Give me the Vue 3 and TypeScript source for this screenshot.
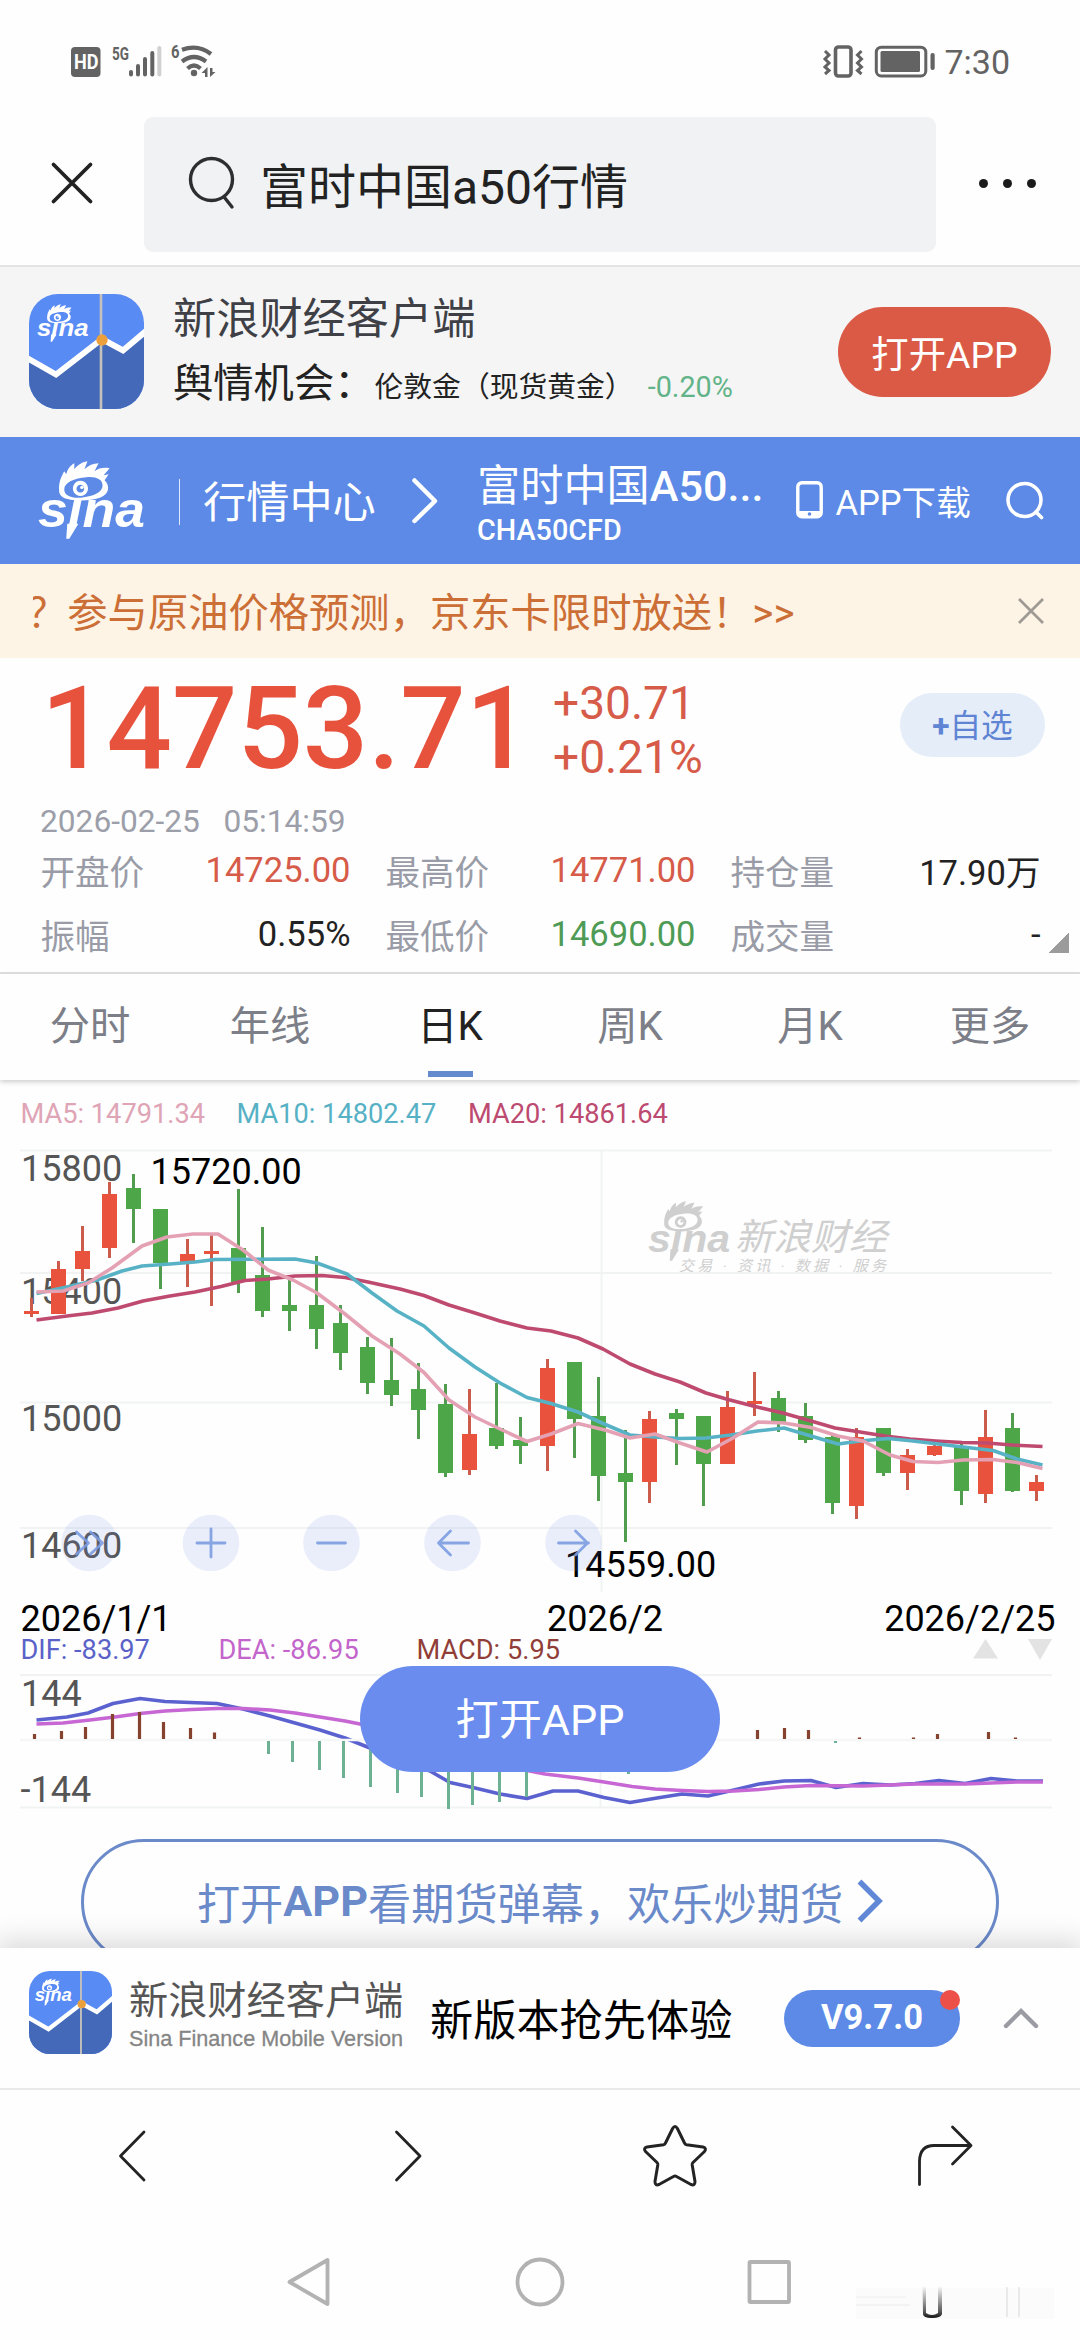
<script setup lang="ts">
type Candle = [x: number, high: number, top: number, bottom: number, low: number, up: 0 | 1]
type Point = [number, number]

// Geometry of the daily candles, in chart units
const candles: Candle[] = [
  [31.5, 218, 231, 234, 237, 1], [58.5, 181, 189, 234, 234, 1], [82.5, 146, 171, 189, 201, 1],
  [109.5, 102, 114, 168, 178, 1], [133.5, 94, 108, 129, 163, 0], [160.5, 129, 129, 183, 209, 0],
  [187.5, 159, 174, 182, 207, 1], [211.5, 155, 171, 174, 226, 1], [238.5, 109, 168, 202, 213, 0],
  [262.5, 147, 195, 231, 237, 0], [289.5, 200, 225, 231, 251, 0], [316.5, 176, 225, 249, 269, 0],
  [340.5, 225, 243, 273, 290, 0], [367.5, 257, 267, 303, 314, 0], [391.5, 258, 300, 315, 326, 0],
  [418.5, 283, 309, 330, 359, 0], [445.5, 304, 324, 393, 397, 0], [469.5, 309, 354, 390, 395, 1],
  [496.5, 303, 348, 366, 369, 0], [520.5, 337, 360, 366, 384, 0], [547.5, 279, 288, 366, 391, 1],
  [574.5, 282, 282, 339, 378, 0], [598.5, 297, 336, 396, 421, 0], [625.5, 350, 393, 402, 462, 0],
  [649.5, 331, 339, 402, 423, 1], [676.5, 329, 333, 339, 385, 0], [703.5, 336, 336, 384, 426, 0],
  [727.5, 311, 327, 384, 384, 1], [754.5, 292, 321, 324, 336, 1], [778.5, 311, 318, 342, 352, 0],
  [805.5, 323, 336, 360, 363, 0], [832.5, 354, 357, 423, 434, 0], [856.5, 348, 357, 426, 439, 1],
  [883.5, 348, 348, 393, 396, 0], [907.5, 369, 375, 393, 410, 1], [934.5, 364, 366, 375, 376, 1],
  [961.5, 364, 366, 411, 425, 0], [985.5, 330, 357, 414, 423, 1], [1012.5, 333, 348, 411, 412, 0],
  [1036.5, 395, 402, 411, 421, 1],
]

const ma5: Point[] = [[36.5, 212], [63, 211], [88, 203], [112, 188], [142, 166], [167, 157], [193, 154], [218, 154], [243, 170], [268, 190], [293, 200], [317, 213], [345, 234], [372, 256], [400, 274], [424, 292.5], [449, 320], [475, 337], [500, 349], [527, 361.5], [551, 354], [578, 343.5], [605, 350], [630, 358], [655, 354], [680, 363], [707, 372], [733, 358], [758, 342], [784, 343], [811, 347.5], [838, 356], [863, 361], [890, 375], [913, 381.5], [938, 382.5], [963, 380], [993, 379.5], [1017, 382.5], [1042.5, 388.5]]
const ma10: Point[] = [[36.5, 213.5], [67, 207], [97, 200], [122, 191], [142, 186], [170, 184], [195, 182], [215, 179.5], [295, 179], [317, 183], [347, 194], [372, 213], [397, 231], [424, 246], [449, 268], [475, 287], [500, 303], [527, 317.5], [551, 323.5], [578, 332], [603, 343.5], [630, 355], [655, 357], [680, 358.5], [706, 358], [731, 355], [757, 351], [784, 348], [811, 356], [838, 364], [860, 361], [888, 358.5], [913, 361], [938, 364], [963, 367], [993, 370.5], [1017, 379], [1042.5, 385]]
const ma20: Point[] = [[36.5, 240], [67, 236], [92, 233], [118, 228], [143, 221], [170, 216], [195, 212], [221, 206.5], [245, 200.5], [268, 199], [295, 196], [322, 195.5], [345, 197.5], [368, 202], [400, 209], [424, 215.5], [449, 225], [475, 233], [500, 241], [527, 248], [551, 251], [578, 258], [603, 269], [630, 284], [655, 294], [680, 302], [706, 313], [728, 319.5], [755, 326.5], [783, 333], [811, 341], [835, 348], [860, 352], [885, 356], [910, 359], [936, 361], [962, 362.5], [987, 363], [1012, 365], [1042.5, 366.5]]

const dif: Point[] = [[36.5, 80], [67, 77], [88, 73], [113, 63.5], [140, 58.5], [165, 61.5], [190, 62.5], [217, 63.5], [243, 69], [270, 76], [295, 83], [320, 90], [345, 98], [370, 108], [430, 131], [450, 142.5], [475, 148], [500, 154], [527, 158.5], [553, 151], [578, 151], [604, 157.5], [630, 162.5], [657, 158], [682, 154], [708, 156], [734, 150], [759, 144], [784, 141], [811, 140.5], [836, 147.5], [863, 143.5], [890, 145], [915, 143.5], [939, 140.5], [965, 143.5], [991, 138.5], [1017, 141], [1043, 141]]
const dea: Point[] = [[36.5, 84], [63, 83], [90, 80], [115, 77], [140, 73.5], [165, 71], [192, 69.5], [217, 68.5], [243, 68.5], [270, 70], [295, 73], [320, 77], [345, 81], [370, 86], [430, 103], [500, 125], [545, 134], [578, 138], [604, 142], [632, 146.5], [655, 149], [682, 150.5], [708, 151.5], [734, 151], [759, 149.5], [784, 147], [811, 145.5], [863, 146], [915, 144], [965, 144], [1017, 142], [1043, 142]]

const risingBars: Point[] = [[34.5, 94], [61.5, 91], [85.5, 87], [112.5, 74], [139.5, 72], [163.5, 82], [190.5, 88], [214.5, 92.5], [757.5, 90], [784.5, 88], [808.5, 90], [859.5, 97.5], [913.5, 97.5], [937.5, 94], [988.5, 92], [1015.5, 97.5]]
const fallingBars: Point[] = [[268.5, 114], [292.5, 122], [319.5, 130], [343.5, 138], [370.5, 147], [397.5, 153], [421.5, 157], [448.5, 169], [472.5, 165], [499.5, 162], [526.5, 157], [553.5, 130], [628.5, 134], [835.5, 103]]

const line = (points: Point[]) => points.map((p) => p.join(',')).join(' ')

const quotes = [
  [{ label: '开盘价', value: '14725.00', tone: 'rise' }, { label: '振幅', value: '0.55%', tone: '' }],
  [{ label: '最高价', value: '14771.00', tone: 'rise' }, { label: '最低价', value: '14690.00', tone: 'fall' }],
  [{ label: '持仓量', value: '17.90万', tone: 'low' }, { label: '成交量', value: '-', tone: 'flat' }],
]
const tabs = ['分时', '年线', '日K', '周K', '月K', '更多']
const activeTab = '日K'
const priceTicks = [['15800', 101], ['15400', 224], ['15000', 350.5], ['14600', 477.5]] as const
const controls = [89.5, 211, 331.5, 452.5, 573.5]
const controlIcons = ['M-13-11L-1 0L-13 11M1-11L13 0L1 11', 'M-14 0H14M0-14V14', 'M-14 0H14', 'M16 0H-14M-2-12L-14 0L-2 12', 'M-15 0H15M2-12L14 0L2 12']
</script>

<template>
  <div class="page">
    <svg class="defs" width="0" height="0">
      <symbol id="sina" viewBox="0 0 107 77">
        <path fill="currentColor" fill-rule="evenodd" d="M21 30C20 20 24 14 26 10L28 13C29 8 32 4 36 2L36 8C39 4 43 1 49 0L46 8C50 4 55 2 60 2L56 10C60 7 65 6 71 7L65 14L70 13L66 19C72 25 70 33 62 36C52 40 32 40 25 36C22 34 21 32 21 30ZM26 28C26 34 33 37 44 36C55 35 64 31 64 24C64 18 57 15 48 16C36 17 26 21 26 28Z" />
        <path fill="currentColor" fill-rule="evenodd" d="M42 19.500a7.500 7.500 0 1 0 .1 0ZM42 23.500a3.800 3.800 0 1 1-.1 0Z" />
        <circle cx="43.500" cy="26" r="1.700" fill="currentColor" />
        <text x="0" y="65" textLength="106" lengthAdjust="spacingAndGlyphs" class="sina-word">sına</text>
        <path fill="currentColor" d="M29 62H40L31 77H28Z" />
      </symbol>
      <symbol id="app-icon" viewBox="0 0 115 115">
        <clipPath id="app-clip"><rect width="115" height="115" rx="29" /></clipPath>
        <g clip-path="url(#app-clip)">
          <rect width="115" height="115" fill="#598bf5" />
          <path d="M0 65L27 81L73 45L94 57L115 38V115H0Z" fill="#4369b8" />
          <path d="M-2 64L27 80.500L73 45L94 56.500L117 37" fill="none" stroke="#fff" stroke-width="6" />
          <path d="M72 0V115" stroke="#c5c1bb" stroke-width="2.600" />
          <circle cx="73" cy="46" r="5.700" fill="#eba03c" />
          <use href="#sina" x="8" y="10" width="52" height="38" color="#fff" />
        </g>
      </symbol>
    </svg>

    <header class="status">
      <svg width="160" height="40" viewBox="66 42 160 40">
        <rect x="71" y="47" width="29.500" height="30" rx="4" fill="#636363" />
        <text x="74" y="69" class="st hd" textLength="24.500" lengthAdjust="spacingAndGlyphs">HD</text>
        <text x="112" y="59.500" class="st tiny" textLength="17" lengthAdjust="spacingAndGlyphs">5G</text>
        <g stroke="#636363" stroke-width="4" stroke-linecap="round">
          <path d="M131 72V74.500M138 66V74.500M145 59V74.500M152.300 53V74.500" />
          <path d="M159.300 48V74.500" stroke="#d0d0d0" />
        </g>
        <text x="171" y="58" class="st tiny" textLength="8.500" lengthAdjust="spacingAndGlyphs">6</text>
        <g fill="none" stroke="#636363" stroke-width="4.200">
          <path d="M182 49.800Q198 44 211 54" /><path d="M182 61.500Q194 52.500 206 61.500" /><path d="M187.500 68.500Q194 62.500 200.500 68.500" />
        </g>
        <circle cx="194" cy="73" r="3.200" fill="#636363" />
        <path d="M201.500 73L207.500 67V77H205V73ZM215.500 72L210 77V68H212.500V72Z" fill="#636363" />
      </svg>
      <div class="status-right">
        <svg width="114" height="34" viewBox="821 45 114 34">
          <g fill="none" stroke="#636363" stroke-width="3">
            <rect x="834.500" y="47" width="15.500" height="29" rx="3" stroke-width="3.600" />
            <path d="M824 51L828 55L824 59L828 63L824 67L828 70.500L824 74" />
            <path d="M860.500 51L856.500 55L860.500 59L856.500 63L860.500 67L856.500 70.500L860.500 74" />
            <rect x="875.300" y="47.200" width="49.500" height="28.800" rx="5" />
          </g>
          <rect x="879.500" y="51" width="39.500" height="21" rx="1.500" fill="#636363" />
          <rect x="929.500" y="53" width="4.200" height="17" rx="2" fill="#636363" />
        </svg>
        <span class="clock">7:30</span>
      </div>
    </header>

    <div class="search-bar">
      <svg width="44" height="44" viewBox="0 0 44 44"><path d="M3.500 3.500L40.500 40.500M40.500 3.500L3.500 40.500" stroke="#222" stroke-width="3.800" stroke-linecap="round" /></svg>
      <div class="search-box">
        <svg width="48" height="54" viewBox="0 0 48 54" fill="none" stroke="#2c2e30" stroke-width="3.400" stroke-linecap="round"><circle cx="23.500" cy="23.500" r="21" /><path d="M36.500 41.500L44 51" /></svg>
        <span>富时中国a50行情</span>
      </div>
      <div class="dots"><i /><i /><i /></div>
    </div>

    <section class="promo">
      <svg class="promo-icon" width="115" height="115"><use href="#app-icon" /></svg>
      <div class="promo-text">
        <div class="promo-title">新浪财经客户端</div>
        <div class="promo-line">舆情机会：<span class="promo-name">伦敦金（现货黄金）</span><span class="promo-pct">-0.20%</span></div>
      </div>
      <button class="open-red">打开APP</button>
    </section>

    <nav class="market">
      <svg class="brand" width="108" height="78"><use href="#sina" /></svg>
      <i class="divider" />
      <span class="market-center">行情中心</span>
      <svg class="chev" width="28" height="48" viewBox="0 0 28 48"><path d="M3.500 3.500L24 24L3.500 44" fill="none" stroke="#fff" stroke-width="4.500" stroke-linecap="round" stroke-linejoin="round" /></svg>
      <div class="contract"><div class="contract-name">富时中国<b>A50...</b></div><div class="contract-code">CHA50CFD</div></div>
      <svg class="phone" width="27" height="38" viewBox="0 0 27 38"><rect x="1.800" y="1.800" width="23.400" height="34" rx="4" fill="none" stroke="#fff" stroke-width="3.400" /><path d="M2 30H25V35H2Z" fill="#fff" /><circle cx="13.500" cy="33" r="1.800" fill="#5c8ae6" /></svg>
      <span class="download">APP下载</span>
      <svg class="find" width="38" height="40" viewBox="0 0 38 40" fill="none" stroke="#fff" stroke-width="3.600" stroke-linecap="round"><circle cx="18.500" cy="19" r="16.500" /><path d="M30 31L35.500 36.500" /></svg>
    </nav>

    <div class="notice">
      <div class="marquee"><span>？参与原油价格预测，京东卡限时放送！&gt;&gt;</span></div>
      <svg width="28" height="28" viewBox="0 0 28 28"><path d="M2 2L26 26M26 2L2 26" stroke="#9f9b94" stroke-width="2.800" /></svg>
    </div>

    <section class="quote">
      <div class="headline">
        <div class="price">14753.71</div>
        <div class="change"><div>+30.71</div><div>+0.21%</div></div>
        <button class="watch"><b>+</b>自选</button>
      </div>
      <div class="time">2026-02-25&nbsp;&nbsp;&nbsp;05:14:59</div>
      <div class="figures">
        <div v-for="(col, i) in quotes" :key="i" class="col">
          <div v-for="q in col" :key="q.label" class="figure"><span>{{ q.label }}</span><em :class="q.tone">{{ q.value }}</em></div>
        </div>
        <i class="corner" />
      </div>
    </section>

    <div class="tabs">
      <div v-for="t in tabs" :key="t" class="tab" :class="{ active: t === activeTab }">{{ t }}</div>
    </div>

    <section class="charts">
      <svg width="1080" height="868" viewBox="0 0 1080 868" class="chart">
        <g class="legend">
          <text x="20.500" y="42.500" fill="#dfa4b5">MA5: 14791.34</text>
          <text x="236.500" y="42.500" fill="#57b1c5">MA10: 14802.47</text>
          <text x="468" y="42.500" fill="#bd4a70">MA20: 14861.64</text>
        </g>
        <g stroke="#f1f3f3" stroke-width="2">
          <path d="M20 70.500H1052M20 193H1052M20 322.500H1052M20 448H1052M601.500 70V512" />
        </g>

        <g color="#cfcfcf">
          <use href="#sina" x="648" y="120" width="83" height="62" />
          <text x="735" y="169.500" class="wm" textLength="152" lengthAdjust="spacingAndGlyphs">新浪财经</text>
          <text x="679" y="190.500" class="wm small" textLength="207">交易 · 资讯 · 数据 · 服务</text>
        </g>

        <g class="axis">
          <text v-for="[label, y] in priceTicks" :key="label" x="21" :y="y">{{ label }}</text>
        </g>
        <g v-for="[x, high, top, bottom, low, up] in candles" :key="x" :fill="up ? '#e9533d' : '#4da749'">
          <rect :x="x - 1.500" :y="high" width="3" :height="low - high" :fill="up ? '#cb5c4c' : '#529c50'" />
          <rect :x="x - 7.500" :y="top" width="15" :height="bottom - top" />
        </g>
        <g fill="none" stroke-width="3.600" stroke-linejoin="round">
          <polyline :points="line(ma20)" stroke="#bf4a70" />
          <polyline :points="line(ma10)" stroke="#58b2c6" />
          <polyline :points="line(ma5)" stroke="#e4a1b4" />
        </g>
        <g class="mark">
          <text x="150.500" y="104">15720.00</text>
          <text x="565" y="497">14559.00</text>
          <text x="20.500" y="551">2026/1/1</text>
          <text x="547" y="551">2026/2</text>
          <text x="1055.500" y="551" text-anchor="end">2026/2/25</text>
        </g>
        <g v-for="(x, i) in controls" :key="x" :transform="`translate(${x} 463)`">
          <circle r="28.300" fill="#6f91e8" fill-opacity=".14" />
          <path :d="controlIcons[i]" fill="none" stroke="#7c9be0" stroke-opacity=".9" stroke-width="2.800" stroke-linecap="round" stroke-linejoin="round" />
        </g>

        <g transform="translate(0 560)">
          <g class="legend">
            <text x="20.500" y="18.700" fill="#5a62c8">DIF: -83.97</text>
            <text x="218.500" y="18.700" fill="#c365cb">DEA: -86.95</text>
            <text x="416.500" y="18.700" fill="#913e38">MACD: 5.95</text>
          </g>
          <path d="M973 18.500L985.500-1L998 18.500ZM1028-1H1052L1040 20Z" fill="#e3e3e3" />
          <path d="M20 35H1052M20 167.500H1052M600.500 35V167.500" stroke="#f1f3f3" stroke-width="2" />
          <g class="axis"><text x="21" y="66">144</text><text x="20.500" y="162">-144</text></g>
          <g fill="none" stroke-width="3.600" stroke-linejoin="round">
            <polyline :points="line(dif)" stroke="#5b62cf" />
            <polyline :points="line(dea)" stroke="#c667d4" />
          </g>
          <path d="M20 100H1052" stroke="#f5f7f7" stroke-width="2.500" />
          <rect v-for="[x, y] in risingBars" :key="x" :x="x - 1.600" :y="y" width="3.200" :height="99 - y" fill="#85432f" />
          <rect v-for="[x, y] in fallingBars" :key="x" :x="x - 1.500" y="101" width="3" :height="y - 101" fill="#6cb194" />
        </g>
      </svg>
      <button class="open-float">打开APP</button>
      <button class="barrage">打开<b>APP</b>看期货弹幕，欢乐炒期货<svg width="27" height="44" viewBox="0 0 27 44"><path d="M2.500 2.500L22 22L2.500 41.500" fill="none" stroke="#6088d6" stroke-width="5.500" /></svg></button>
    </section>

    <section class="client">
      <svg class="client-icon" width="83" height="83"><use href="#app-icon" /></svg>
      <div class="client-names">
        <div class="client-cn">新浪财经客户端</div>
        <svg width="276" height="28"><text x="0" y="17" textLength="274" lengthAdjust="spacingAndGlyphs" class="client-en">Sina Finance Mobile Version</text></svg>
      </div>
      <div class="client-msg">新版本抢先体验</div>
      <div class="version">V9.7.0<i /></div>
      <svg class="caret" width="36" height="22" viewBox="0 0 36 22"><path d="M3 19L18 4L33 19" fill="none" stroke="#9b9ba3" stroke-width="4.400" stroke-linecap="round" /></svg>
    </section>

    <footer class="tools">
      <svg width="1080" height="142" viewBox="0 2090 1080 142" fill="none" stroke="#232323" stroke-width="2.800" stroke-linecap="round" stroke-linejoin="round">
        <path d="M144 2132L120.500 2156L144 2180" />
        <path d="M396.500 2132L420 2156L396.500 2180" />
        <path stroke-width="3" d="M672.600 2128.500Q675 2124.500 677.400 2128.500L684.500 2143Q685 2144.500 686.500 2144.800L703 2147Q707 2148 704.500 2151.500L693 2162.500Q692 2163.600 692.200 2165L695 2181.500Q695 2186 691 2184.500L676.500 2176.500Q675 2175.600 673.500 2176.500L659 2184.500Q655 2186 655 2181.500L657.800 2165Q658 2163.600 657 2162.500L645.500 2151.500Q643 2148 647 2147L663.500 2144.800Q665 2144.500 665.500 2143Z" />
        <path d="M919.500 2184.500V2161Q920 2145.500 934 2145.500H970M952.500 2127L971 2145.500L952.500 2164" />
      </svg>
      <svg width="1080" height="108" viewBox="0 2232 1080 108" fill="none" stroke="#b2b2b2" stroke-width="3.800" stroke-linejoin="round">
        <defs>
          <linearGradient id="fade" x1="0" y1="0" x2="0" y2="1"><stop offset="0" stop-color="#222" stop-opacity="0" /><stop offset=".8" stop-color="#222" stop-opacity=".75" /><stop offset="1" stop-color="#111" /></linearGradient>
        </defs>
        <path d="M327.500 2260V2304L289.500 2282Z" />
        <circle cx="540" cy="2282" r="22.500" />
        <rect x="749.500" y="2262" width="39.500" height="40" rx="1" />
        <g stroke="none" fill="#000">
          <rect x="856" y="2288" width="198" height="31" fill-opacity=".01" />
          <rect x="856" y="2296" width="50" height="2" fill-opacity=".025" />
          <rect x="856" y="2304" width="54" height="2" fill-opacity=".03" />
          <rect x="1006" y="2287" width="2" height="30" fill-opacity=".07" />
          <rect x="1018" y="2287" width="2" height="30" fill-opacity=".07" />
          <path d="M922.500 2286H926V2313Q932 2317 938 2313V2286H942V2314Q941 2318 932 2318T923 2314Z" fill="url(#fade)" />
        </g>
      </svg>
    </footer>
  </div>
</template>

<style>
body {
  background: #fff;
}
</style>

<style scoped>
.page {
  width: 1080px;
  height: 2340px;
  overflow: hidden;
  display: flex;
  flex-direction: column;
  background: #fefefe;
  font-family: Roboto, "Noto Sans CJK SC", sans-serif;
  color: #222;
}
.page > * {
  flex: none;
  box-sizing: border-box;
}
svg {
  display: block;
  flex: none;
}
button {
  border: 0;
  padding: 0;
  font-family: inherit;
  white-space: nowrap;
}
.sina-word {
  font: italic 700 50px "Liberation Sans", sans-serif;
  fill: currentColor;
}
.status {
  height: 117px;
  display: flex;
  justify-content: space-between;
  padding: 42px 70px 0 66px;
}
.st {
  font: 700 21px Roboto, sans-serif;
  fill: #fff;
}
.st.tiny {
  font-size: 18.5px;
  fill: #636363;
}
.status-right {
  display: flex;
  gap: 8px;
  padding-top: 3px;
}
.clock {
  font-size: 34px;
  line-height: 34px;
  color: #636363;
}
.search-bar {
  height: 150px;
  display: flex;
  align-items: flex-start;
  border-bottom: 2px solid #e4e4e4;
  padding-left: 50px;
}
.search-bar > svg {
  margin: 44px 50px 0 0;
}
.search-box {
  width: 792px;
  height: 135px;
  border-radius: 9px;
  background: #f0f2f4;
  display: flex;
  align-items: flex-start;
  box-sizing: border-box;
  padding: 39px 0 0 44px;
}
.search-box span {
  font-size: 48px;
  line-height: 60px;
  margin: 2px 0 0 24px;
}
.dots {
  display: flex;
  gap: 14.500px;
  padding: 61.500px 0 0 42.500px;
}
.dots i {
  width: 9.500px;
  height: 9.500px;
  border-radius: 50%;
  background: #1b1b1b;
}
.promo {
  height: 170px;
  background: #f5f5f5;
  display: flex;
  align-items: flex-start;
  padding: 27px 29px 0;
}
.promo-text {
  flex: 1;
  padding-left: 29px;
  white-space: nowrap;
}
.promo-title {
  font-size: 43.200px;
  line-height: 50px;
  margin-top: 1px;
  color: #3e4046;
}
.promo-line {
  font-size: 40.300px;
  line-height: 50px;
  margin-top: 14px;
}
.promo-name {
  font-size: 28.800px;
}
.promo-pct {
  font-size: 28.800px;
  margin-left: 14px;
  color: #62b488;
}
.open-red {
  width: 213px;
  height: 90px;
  margin-top: 13px;
  border-radius: 45px;
  background: #da5a46;
  color: #fff;
  font-size: 37.400px;
}
.market {
  height: 127px;
  background: #5c8ae6;
  color: #fff;
  display: flex;
  align-items: flex-start;
  padding-left: 38px;
  white-space: nowrap;
}
.brand {
  margin-top: 24px;
}
.divider {
  width: 1.500px;
  height: 46px;
  background: #dfe9fb;
  margin: 42px 0 0 32.500px;
}
.market-center {
  width: 173px;
  font-size: 43.200px;
  line-height: 50px;
  margin: 42px 0 0 23px;
}
.chev {
  margin: 40px 0 0 35px;
}
.contract {
  width: 284px;
  margin: 25px 0 0 38px;
}
.contract-name {
  font-size: 43.200px;
  line-height: 50px;
}
.contract-name b {
  font-weight: 500;
}
.contract-code {
  font-size: 28.800px;
  line-height: 34px;
  font-weight: 500;
  margin-top: 1px;
}
.phone {
  margin: 44px 0 0 34.500px;
}
.download {
  width: 136px;
  font-size: 34.560px;
  line-height: 40px;
  margin: 46px 0 0 13px;
}
.find {
  margin: 44px 0 0 34px;
}
.notice {
  height: 94px;
  background: #fdf4e6;
  color: #cc6f37;
  display: flex;
  align-items: center;
  justify-content: space-between;
  padding: 0 35px 0 33px;
  font-size: 40.300px;
  line-height: 60px;
}
.marquee {
  overflow: hidden;
  white-space: nowrap;
  padding-top: 5px;
}
.marquee span {
  margin-left: -6px;
}
.quote {
  height: 316px;
  border-bottom: 2px solid #e1e1e1;
}
.headline {
  height: 146px;
  display: flex;
}
.price {
  width: 513px;
  box-sizing: border-box;
  padding: 11px 0 0 41px;
  font-size: 115.200px;
  line-height: 120px;
  font-weight: 500;
  color: #e7523d;
}
.change {
  width: 347px;
  padding: 18px 0 0 40px;
  box-sizing: content-box;
  font-size: 46.080px;
  line-height: 54px;
  color: #d65b49;
}
.watch {
  width: 145px;
  height: 64px;
  margin-top: 35px;
  border-radius: 32px;
  background: #e5edf9;
  color: #5f84d3;
  font-size: 31.680px;
  padding-bottom: 5px;
}
.watch b {
  font-weight: 700;
}
.time {
  font-size: 31.680px;
  line-height: 36px;
  padding-left: 40px;
  color: #9c9fa9;
}
.figures {
  display: flex;
  padding: 10px 0 0 40.500px;
  gap: 35px;
}
.col {
  width: 310px;
}
.figure {
  height: 64px;
  display: flex;
  justify-content: space-between;
  font-size: 34.560px;
  line-height: 40px;
}
.figure span {
  color: #999ca7;
  padding-top: 3px;
}
.figure em {
  font-style: normal;
}
.figure .rise {
  color: #d65b49;
}
.figure .fall {
  color: #4e9b55;
}
.figure .low {
  padding-top: 3px;
}
.corner {
  width: 20px;
  height: 20px;
  margin: 83px 0 0 -27px;
  background: linear-gradient(135deg, transparent 50%, #9b9b9b 50%);
}
.tabs {
  height: 106px;
  display: flex;
  background: #fefefe;
  box-shadow: 0 2px 5px rgba(0, 0, 0, 0.2);
}
.tab {
  flex: 1;
  display: flex;
  flex-direction: column;
  align-items: center;
  font-size: 40.300px;
  line-height: 60px;
  padding-top: 23px;
  color: #7c7e88;
}
.tab.active {
  color: #222;
}
.tab.active::after {
  content: "";
  width: 45px;
  height: 6px;
  margin-top: 14px;
  background: #648bcd;
}
.charts {
  position: relative;
  height: 868px;
  overflow: hidden;
}
.chart text {
  font-family: Roboto, "Noto Sans CJK SC", sans-serif;
}
.legend {
  font-size: 27.200px;
}
.axis {
  font-size: 36px;
  fill: #555;
}
.mark {
  font-size: 36px;
  fill: #000;
}
.wm {
  font-size: 37px;
  font-style: italic;
  fill: currentColor;
}
.wm.small {
  font-size: 15px;
}
.open-float {
  position: absolute;
  left: 360px;
  top: 586px;
  width: 360px;
  height: 106px;
  border-radius: 53px;
  background: #698cee;
  color: #fff;
  font-size: 43.200px;
  padding-bottom: 7px;
}
.barrage {
  position: absolute;
  left: 81px;
  top: 759px;
  width: 918px;
  height: 126px;
  border: 3px solid #6b8aca;
  border-radius: 63px;
  background: transparent;
  color: #6b8aca;
  font-size: 43.200px;
  padding: 0 0 2px 1px;
  display: flex;
  align-items: center;
  justify-content: center;
}
.barrage svg {
  margin-left: 14px;
}
.client {
  position: relative;
  height: 142px;
  background: #fefefe;
  border-bottom: 2px solid #e9e9e9;
  box-shadow: 0 -4px 26px 4px rgba(0, 0, 0, 0.14);
  clip-path: inset(-36px 0 0 0);
  display: flex;
  align-items: flex-start;
  padding: 23px 0 0 29px;
  white-space: nowrap;
}
.client-names {
  width: 276px;
  margin-left: 17px;
}
.client-cn {
  font-size: 39.200px;
  line-height: 46px;
  margin: 7px 0 5px;
  color: #555;
}
.client-en {
  font-family: "Liberation Sans", sans-serif;
  font-size: 22px;
  fill: #858585;
  stroke: #858585;
  stroke-width: 0.3px;
}
.client-msg {
  width: 302px;
  font-size: 43.200px;
  line-height: 50px;
  margin: 25.500px 0 0 25px;
  color: #000;
}
.version {
  position: relative;
  width: 176px;
  height: 57px;
  margin: 19px 0 0 52px;
  border-radius: 29px;
  background: #5c8ae6;
  color: #fff;
  font-size: 34.560px;
  font-weight: 700;
  line-height: 54px;
  text-align: center;
}
.version i {
  position: absolute;
  top: 0;
  right: 0;
  width: 20px;
  height: 20px;
  border-radius: 50%;
  background: #ec5049;
}
.caret {
  margin: 36px 0 0 43px;
}
.tools {
  height: 250px;
}
</style>
